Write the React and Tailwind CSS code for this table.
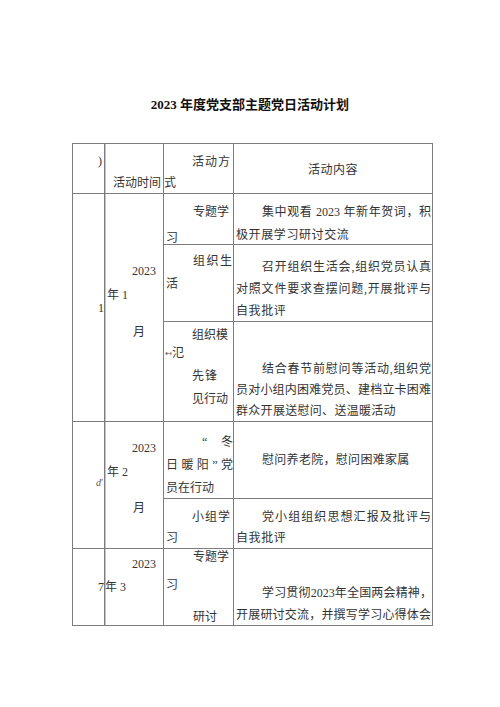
import React from "react";

const L = ({ c = "", children }) => (
  <div className={"h-[16px] leading-[16px] whitespace-nowrap " + c}>{children}</div>
);

const J = ({ c = "", children }) => (
  <div className={"h-[16px] leading-[16px] overflow-visible text-justify [text-align-last:justify] " + c}>{children}</div>
);

export default function App() {
  return (
    <div className="w-[500px] h-[707px] bg-white text-[#333] text-[12px] font-['Liberation_Serif','Noto_Sans_CJK_SC',serif]">
      <div className="pt-[95px] h-[20px] leading-[20px] text-center text-[13px] text-[#111] box-content">
        <span className="font-bold">2023</span>
        <span className="font-semibold"> 年度党支部主题党日活动计划</span>
      </div>
      <div className="mt-[28px] ml-[72px] w-[361px] grid grid-cols-[31px_58px_69px_198px] grid-rows-[49px_50px_76px_99px_76px_49px_76px] gap-px p-px bg-[#7d7d7d]">
        {/* header */}
        <div className="col-start-1 row-start-1 bg-white flex flex-col pt-[9px]">
          <L c="text-right pr-[2px]">)</L>
        </div>
        <div className="col-start-2 row-start-1 bg-white flex flex-col pt-[31px] shadow-[inset_1px_0_0_#c4c4c4]">
          <L c="text-right pr-[2px]">活动时间</L>
        </div>
        <div className="col-start-3 row-start-1 bg-white flex flex-col pt-[10px]">
          <L c="pl-[28px] tracking-[1px]">活动方</L>
          <L c="mt-[5px] pl-[0px]">式</L>
        </div>
        <div className="col-start-4 row-start-1 bg-white flex flex-col pt-[18px]">
          <L c="text-center tracking-[0.5px]">活动内容</L>
        </div>

        {/* month 1 */}
        <div className="col-start-1 row-start-2 row-span-3 bg-white flex flex-col pt-[106px]">
          <L c="text-right pr-[0px]">1</L>
        </div>
        <div className="col-start-2 row-start-2 row-span-3 bg-white flex flex-col pt-[69px] shadow-[inset_1px_0_0_#c4c4c4]">
          <L c="pl-[27px]">2023</L>
          <L c="mt-[8px] pl-[2px]">年 1</L>
          <L c="mt-[21px] pl-[28px]">月</L>
        </div>

        <div className="col-start-3 row-start-2 bg-white flex flex-col pt-[10px]">
          <L c="pl-[29px]">专题学</L>
          <L c="mt-[10px] pl-[2px]">习</L>
        </div>
        <div className="col-start-4 row-start-2 bg-white flex flex-col pt-[10px] pl-[2px] pr-[1px]">
          <J c="pl-[26px]">集中观看 2023 年新年贺词，积</J>
          <L c="mt-[7px] tracking-[0.6px]">极开展学习研讨交流</L>
        </div>

        <div className="col-start-3 row-start-3 bg-white flex flex-col pt-[8px]">
          <L c="pl-[29px] tracking-[1.5px]">组织生</L>
          <L c="mt-[7px] pl-[2px]">活</L>
        </div>
        <div className="col-start-4 row-start-3 bg-white flex flex-col pt-[14px] pl-[2px] pr-[1px]">
          <J c="pl-[26px]">召开组织生活会,组织党员认真</J>
          <J c="mt-[6px]">对照文件要求查摆问题,开展批评与</J>
          <L c="mt-[6px] tracking-[0.6px]">自我批评</L>
        </div>

        <div className="col-start-3 row-start-4 bg-white flex flex-col pt-[5px]">
          <L c="pl-[28px]">组织模</L>
          <L c="mt-[2px] pl-[1px]">
            <span className="text-[8px] text-[#555] align-middle">↤</span>
            <span>氾</span>
          </L>
          <L c="mt-[7px] pl-[28px] tracking-[1px]">先锋</L>
          <L c="mt-[7px] pl-[28px]">见行动</L>
        </div>
        <div className="col-start-4 row-start-4 bg-white flex flex-col pt-[39px] pl-[2px] pr-[1px]">
          <J c="pl-[26px]">结合春节前慰问等活动,组织党</J>
          <J c="mt-[5px]">员对小组内困难党员、建档立卡困难</J>
          <L c="mt-[5px] tracking-[0.3px]">群众开展送慰问、送温暖活动</L>
        </div>

        {/* month 2 */}
        <div className="col-start-1 row-start-5 row-span-2 bg-white flex flex-col pt-[53px]">
          <L c="text-right pr-[2px] italic text-[10px] text-[#555]">ď</L>
        </div>
        <div className="col-start-2 row-start-5 row-span-2 bg-white flex flex-col pt-[18px] shadow-[inset_1px_0_0_#c4c4c4]">
          <L c="pl-[27px]">2023</L>
          <L c="mt-[8px] pl-[2px]">年 2</L>
          <L c="mt-[20px] pl-[28px]">月</L>
        </div>

        <div className="col-start-3 row-start-5 bg-white flex flex-col pt-[12px]">
          <L c="flex justify-between pl-[38px] pr-[0px]">
            <span>“</span>
            <span>冬</span>
          </L>
          <J c="mt-[7px] pl-[2px]">日暖阳”党</J>
          <L c="mt-[7px] pl-[2px]">员在行动</L>
        </div>
        <div className="col-start-4 row-start-5 bg-white flex flex-col pt-[30px] pl-[2px] pr-[1px]">
          <L c="pl-[26px] tracking-[0.3px]">慰问养老院，慰问困难家属</L>
        </div>

        <div className="col-start-3 row-start-6 bg-white flex flex-col pt-[10px]">
          <L c="pl-[28px] tracking-[1px]">小组学</L>
          <L c="mt-[5px] pl-[2px]">习</L>
        </div>
        <div className="col-start-4 row-start-6 bg-white flex flex-col pt-[10px] pl-[2px] pr-[1px]">
          <J c="pl-[26px]">党小组组织思想汇报及批评与</J>
          <L c="mt-[5px] tracking-[0.6px]">自我批评</L>
        </div>

        {/* month 3 */}
        <div className="col-start-1 row-start-7 bg-white flex flex-col pt-[30px]">
          <L c="text-right pr-[0px]">7</L>
        </div>
        <div className="col-start-2 row-start-7 bg-white flex flex-col pt-[7px] shadow-[inset_1px_0_0_#c4c4c4]">
          <L c="pl-[27px]">2023</L>
          <L c="mt-[7px] pl-[0px]">年 3</L>
        </div>
        <div className="col-start-3 row-start-7 bg-white flex flex-col pt-[0px]">
          <L c="pl-[29px]">专题学</L>
          <L c="mt-[12px] pl-[2px]">习</L>
          <L c="mt-[16px] pl-[29px]">研讨</L>
        </div>
        <div className="col-start-4 row-start-7 bg-white flex flex-col pt-[36px] pl-[2px] pr-[0px]">
          <J c="pl-[26px]">学习贯彻2023年全国两会精神，</J>
          <J c="mt-[6px] pr-[1px]">开展研讨交流，并撰写学习心得体会</J>
        </div>
      </div>
    </div>
  );
}
